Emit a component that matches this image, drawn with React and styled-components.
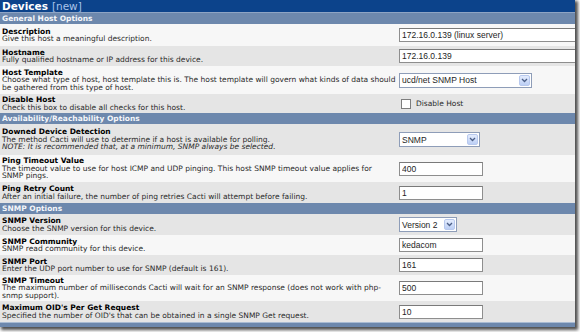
import React from "react";
import styled, { createGlobalStyle } from "styled-components";

const GlobalStyle = createGlobalStyle`
  html, body { margin: 0; padding: 0; background: #ffffff; }
  body {
    width: 580px; height: 332px; overflow: hidden;
    font-family: "DejaVu Sans", Verdana, sans-serif;
    color: #000;
  }
`;

const Panel = styled.div`
  width: 575px;
  height: 327px;
  overflow: hidden;
  display: flex;
  flex-direction: column;
  background: #f5f5f5;
  box-shadow: 2px 2px 3px 1px #4f4f4f;
`;

const TitleBar = styled.div`
  height: 12px;
  flex: none;
  background: #0c438b;
  border-bottom: 1px solid #8ea4c4;
  display: flex;
  align-items: center;
  gap: 4px;
  padding-left: 2px;
  font-size: 10.5px;
  font-weight: bold;
  color: #ffffff;
  white-space: nowrap;
`;

const NewTag = styled.span`
  font-weight: normal;
  color: #a9c3ea;
`;

const Section = styled.div`
  height: 11px;
  flex: none;
  background: #6d88ad;
  display: flex;
  align-items: center;
  padding-left: 2px;
  font-size: 7.5px;
  font-weight: bold;
  color: #f4f6fa;
  white-space: nowrap;
`;

const Row = styled.div`
  flex: none;
  height: ${(p) => p.$h}px;
  display: grid;
  grid-template-columns: 397px 1fr;
  align-items: center;
  background: ${(p) => (p.$alt ? "#e5e5e5" : "#f7f7f7")};
`;

const Info = styled.div`
  padding-left: 2px;
  font-size: 7.5px;
  line-height: 7.5px;
  white-space: nowrap;
  color: #2a2a2a;
`;

const Label = styled.div`
  font-weight: bold;
  color: #000;
`;

const Note = styled.div`
  font-style: italic;
`;

const Control = styled.div`
  padding-left: 2px;
  display: flex;
  align-items: center;
  gap: 5px;
  white-space: nowrap;
`;

const TextBox = styled.input`
  box-sizing: border-box;
  width: ${(p) => p.$w}px;
  height: 14px;
  margin: 0;
  padding: 0 2px;
  border: 1px solid #8e8e8e;
  border-top-color: #7a7a7a;
  background: #ffffff;
  font-family: "Liberation Sans", Arial, sans-serif;
  font-size: 8.5px;
  color: #1e1e1e;
  outline: none;
`;

const SelectBox = styled.div`
  box-sizing: border-box;
  width: ${(p) => p.$w}px;
  height: 15px;
  border: 1px solid #8e9db8;
  background: #ffffff;
  display: flex;
  align-items: center;
  justify-content: space-between;
  padding-left: 2px;
  font-family: "Liberation Sans", Arial, sans-serif;
  font-size: 8.5px;
  color: #1e1e1e;
`;

const DropButton = styled.span`
  box-sizing: border-box;
  width: 11px;
  height: 11px;
  margin-right: 1px;
  border: 1px solid #b8c9ee;
  border-radius: 2px;
  background: linear-gradient(#e4ecfd, #bccff5);
  display: flex;
  align-items: center;
  justify-content: center;
`;

const CheckBox = styled.span`
  box-sizing: border-box;
  width: 10px;
  height: 10px;
  margin-left: 2px;
  border: 1px solid #7d7d7d;
  background: #ffffff;
`;

const CheckLabel = styled.span`
  font-size: 7.5px;
  color: #2a2a2a;
`;

const BottomBar = styled.div`
  height: 5px;
  flex: none;
  background: #6d88ad;
  border-top: 1px solid #a9bbd3;
`;

const Chevron = () => (
  <svg width="7" height="5" viewBox="0 0 7 5">
    <path d="M1 1 L3.5 3.5 L6 1" fill="none" stroke="#4b5f87" strokeWidth="1.3" />
  </svg>
);

const Select = ({ w, children }) => (
  <SelectBox $w={w}>
    <span>{children}</span>
    <DropButton>
      <Chevron />
    </DropButton>
  </SelectBox>
);

const Field = ({ h, alt, label, lines, note, children }) => (
  <Row $h={h} $alt={alt}>
    <Info>
      <Label>{label}</Label>
      {lines.map((l, i) => (
        <div key={i}>{l}</div>
      ))}
      {note && <Note>{note}</Note>}
    </Info>
    <Control>{children}</Control>
  </Row>
);

export default function App() {
  return (
    <>
      <GlobalStyle />
      <Panel>
        <TitleBar>
          Devices <NewTag>[new]</NewTag>
        </TitleBar>
        <Section>General Host Options</Section>
        <Field h={22} label="Description" lines={["Give this host a meaningful description."]}>
          <TextBox $w={200} readOnly value="172.16.0.139 (linux server)" />
        </Field>
        <Field h={20} alt label="Hostname" lines={["Fully qualified hostname or IP address for this device."]}>
          <TextBox $w={200} readOnly value="172.16.0.139" />
        </Field>
        <Field
          h={28}
          label="Host Template"
          lines={[
            "Choose what type of host, host template this is. The host template will govern what kinds of data should",
            "be gathered from this type of host.",
          ]}
        >
          <Select w={133}>ucd/net SNMP Host</Select>
        </Field>
        <Field h={19} alt label="Disable Host" lines={["Check this box to disable all checks for this host."]}>
          <CheckBox />
          <CheckLabel>Disable Host</CheckLabel>
        </Field>
        <Section>Availability/Reachability Options</Section>
        <Field
          h={31}
          alt
          label="Downed Device Detection"
          lines={["The method Cacti will use to determine if a host is available for polling."]}
          note="NOTE: It is recommended that, at a minimum, SNMP always be selected."
        >
          <Select w={81}>SNMP</Select>
        </Field>
        <Field
          h={27}
          label="Ping Timeout Value"
          lines={[
            "The timeout value to use for host ICMP and UDP pinging. This host SNMP timeout value applies for",
            "SNMP pings.",
          ]}
        >
          <TextBox $w={84} readOnly value="400" />
        </Field>
        <Field
          h={21}
          alt
          label="Ping Retry Count"
          lines={["After an initial failure, the number of ping retries Cacti will attempt before failing."]}
        >
          <TextBox $w={84} readOnly value="1" />
        </Field>
        <Section>SNMP Options</Section>
        <Field h={21} alt label="SNMP Version" lines={["Choose the SNMP version for this device."]}>
          <Select w={58}>Version 2</Select>
        </Field>
        <Field h={20} label="SNMP Community" lines={["SNMP read community for this device."]}>
          <TextBox $w={84} readOnly value="kedacom" />
        </Field>
        <Field h={20} alt label="SNMP Port" lines={["Enter the UDP port number to use for SNMP (default is 161)."]}>
          <TextBox $w={84} readOnly value="161" />
        </Field>
        <Field
          h={26}
          label="SNMP Timeout"
          lines={[
            "The maximum number of milliseconds Cacti will wait for an SNMP response (does not work with php-",
            "snmp support).",
          ]}
        >
          <TextBox $w={84} readOnly value="500" />
        </Field>
        <Field
          h={21}
          alt
          label="Maximum OID's Per Get Request"
          lines={["Specified the number of OID's that can be obtained in a single SNMP Get request."]}
        >
          <TextBox $w={84} readOnly value="10" />
        </Field>
        <BottomBar />
      </Panel>
    </>
  );
}
